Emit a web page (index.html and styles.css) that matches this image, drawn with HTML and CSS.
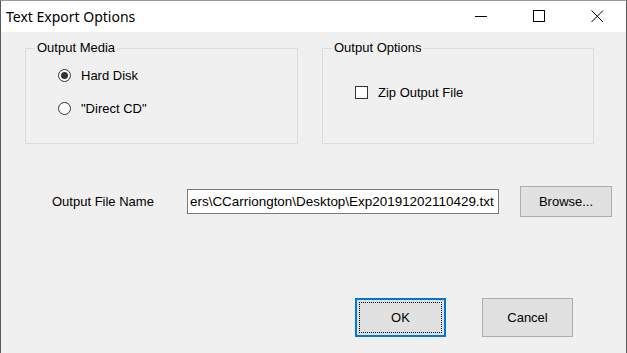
FILE: index.html
```html
<!DOCTYPE html>
<html lang="en">
<head>
    <meta charset="UTF-8">
    <meta name="viewport" content="width=device-width, initial-scale=1.0">
    <link rel="stylesheet" href="styles.css">
    <title>Text Export Options</title>
</head>
<body>
    <div class="window">
        <div class="title-bar">
            <span class="title-text">Text Export Options</span>
            <div class="title-buttons">
                <span class="title-button">
                    <svg width="13" height="13" viewBox="0 0 13 13"><path d="M0 6.5 H12" stroke="#000" stroke-width="1"/></svg>
                </span>
                <span class="title-button">
                    <svg width="13" height="13" viewBox="0 0 13 13"><rect x="0.5" y="0.5" width="11" height="11" fill="none" stroke="#000" stroke-width="1"/></svg>
                </span>
                <span class="title-button close">
                    <svg width="13" height="13" viewBox="0 0 13 13"><path d="M0.5 0.5 L12 12 M12 0.5 L0.5 12" stroke="#000" stroke-width="1"/></svg>
                </span>
            </div>
        </div>

        <div class="client">
            <div class="groups">
                <div class="group media-group">
                    <div class="group-title">Output Media</div>
                    <label class="option first">
                        <span class="radio checked"></span>
                        <span>Hard Disk</span>
                    </label>
                    <label class="option">
                        <span class="radio"></span>
                        <span>"Direct CD"</span>
                    </label>
                </div>
                <div class="group options-group">
                    <div class="group-title">Output Options</div>
                    <label class="option zip">
                        <span class="checkbox"></span>
                        <span>Zip Output File</span>
                    </label>
                </div>
            </div>

            <div class="file-row">
                <span class="file-label">Output File Name</span>
                <div class="text-box">ers\CCarriongton\Desktop\Exp20191202110429.txt</div>
                <button class="win-button browse-button">Browse...</button>
            </div>

            <div class="dialog-buttons">
                <button class="win-button ok-button">OK</button>
                <button class="win-button cancel-button">Cancel</button>
            </div>
        </div>
    </div>
</body>
</html>
```

FILE: styles.css
```css
body {
    margin: 0;
    padding: 0;
    background-color: #f0f0f0;
    font-family: "Liberation Sans", Arial, sans-serif;
    font-size: 13px;
    color: #000;
}

.window {
    height: 353px;
    box-sizing: border-box;
    border-left: 1px solid #5a5a5a;
    border-right: 1px solid #5a5a5a;
    border-top: 1px solid #9a9a9a;
    display: flex;
    flex-direction: column;
}

.title-bar {
    height: 31px;
    background-color: #fff;
    display: flex;
    align-items: center;
    flex-shrink: 0;
}

.title-text {
    font-family: "Noto Sans", sans-serif;
    font-size: 14px;
    margin-left: 5px;
    flex: 1;
}

.title-buttons {
    display: flex;
    height: 100%;
}

.title-button {
    width: 58px;
    display: flex;
    align-items: center;
    justify-content: center;
}

.title-button svg {
    display: block;
}

.client {
    flex: 1;
    background-color: #f0f0f0;
    padding: 16px 0 0 24px;
}

.groups {
    display: flex;
    gap: 24px;
}

.group {
    height: 96px;
    box-sizing: border-box;
    border: 1px solid #dcdcdc;
}

.media-group {
    width: 273px;
}

.options-group {
    width: 272px;
}

.group-title {
    width: fit-content;
    margin: -9px 0 0 9px;
    padding: 0 2px;
    line-height: 16px;
    background-color: #f0f0f0;
}

.option {
    display: flex;
    align-items: center;
    height: 20px;
    margin-left: 32px;
    gap: 10px;
}

.option.first {
    margin-top: 9px;
    margin-bottom: 13px;
}

.option.zip {
    margin-top: 26px;
}

.radio {
    width: 13px;
    height: 13px;
    box-sizing: border-box;
    border: 1px solid #333;
    border-radius: 50%;
    background-color: #fff;
    display: flex;
    align-items: center;
    justify-content: center;
}

.radio.checked::after {
    content: "";
    width: 7px;
    height: 7px;
    border-radius: 50%;
    background-color: #333;
}

.checkbox {
    width: 13px;
    height: 13px;
    box-sizing: border-box;
    border: 1px solid #333;
    background-color: #fff;
}

.file-row {
    display: flex;
    align-items: center;
    margin: 42px 0 0 27px;
}

.file-label {
    width: 135px;
}

.text-box {
    width: 312px;
    height: 25px;
    box-sizing: border-box;
    border: 1px solid #7a7a7a;
    background-color: #fff;
    padding: 0 2px;
    font-size: 13.45px;
    line-height: 23px;
    white-space: nowrap;
    overflow: hidden;
}

.win-button {
    font-family: "Liberation Sans", Arial, sans-serif;
    font-size: 13px;
    color: #000;
    background-color: #e1e1e1;
    border: 1px solid #adadad;
    padding: 0;
    box-sizing: border-box;
}

.browse-button {
    width: 92px;
    height: 31px;
    margin-left: 21px;
}

.dialog-buttons {
    display: flex;
    gap: 36px;
    margin: 81px 0 0 330px;
}

.ok-button,
.cancel-button {
    width: 91px;
    height: 39px;
}

.ok-button {
    border: 2px solid #0078d7;
    outline: 1px dotted #000;
    outline-offset: -5px;
}
```
